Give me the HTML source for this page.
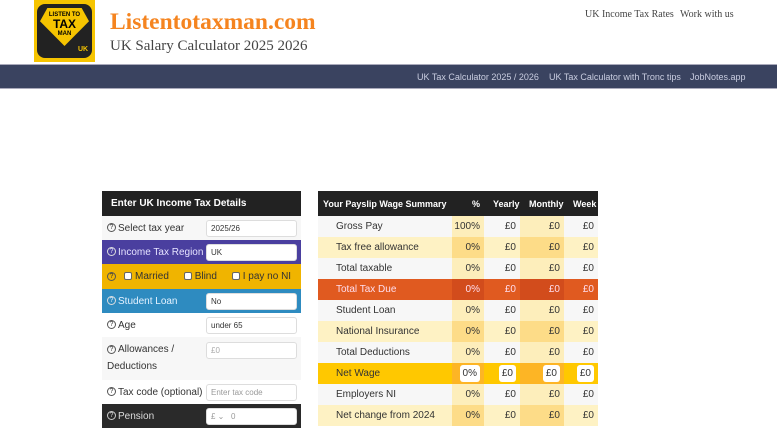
<!DOCTYPE html>
<html><head><style>
*{box-sizing:border-box;margin:0;padding:0}
body{width:777px;height:423px;overflow:hidden;background:#fff;font-family:"Liberation Sans",sans-serif;position:relative}
.abs{position:absolute}
.serif{font-family:"Liberation Serif",serif}
.nav{left:0;top:64px;width:777px;height:25px;background:#3a4360;border-top:1px solid #aab;border-bottom:1px solid #aab}
.nav span{position:absolute;top:7px;color:#c9cde0;font-size:9px;white-space:nowrap}
table{border-collapse:collapse;position:absolute;font-size:10px;color:#333;table-layout:fixed}
td,th{white-space:nowrap;overflow:hidden}
.lt{left:102px;top:191px;width:199px}
.lt td{height:24px;padding-left:5px;background:#f7f7f7;vertical-align:middle}
.lt td+td{padding-left:0}
.lt th,.rt th{background:#222;color:#fff;height:25px;text-align:left;padding-left:9px;font-size:10px}
.inp{display:block;background:#fff;border:1px solid #ddd;border-radius:3px;height:17px;width:91px;font-size:8px;padding:3px 4px;color:#333}
.q{display:inline-block;width:9px;height:9px;border:1px solid #555;border-radius:50%;font-size:7px;line-height:7px;text-align:center;vertical-align:middle;margin-right:2px}
.rt{left:318px;top:191px;width:280px}
.rt th{font-size:9px;overflow:visible;text-align:right;padding-right:3px}
.rt td{height:21px;text-align:right;padding-right:4px;background:#f7f7f7}
.rt td:first-child{text-align:left;padding-left:18px}
.rt tr.a td{background:#fef2c4}
.rt td.c{background:#fdeebb}
.rt tr.a td.c{background:#fddc88}
.rt tr.t td{background:#e05a20;color:#fde}
.rt tr.t td.c{background:#d24c1c}
.rt tr.n td{background:#ffc800}
.rt tr.n td.c{background:#fdb525}
.box{display:inline-block;background:#fff;border-radius:3px;padding:3px 3px}
.cb{display:inline-block;width:8px;height:8px;background:#fff;border:1px solid #666;border-radius:2px;vertical-align:middle;margin:0 3px 0 6px}
</style></head><body>
<div class="abs" style="left:34px;top:0;width:61px;height:62px;background:#f6c400">
 <div class="abs" style="left:3px;top:4px;width:55px;height:54px;background:#222;border-radius:8px"></div>
 <div class="abs" style="left:6px;top:8px;width:49px;height:38px;background:#f6c400;clip-path:polygon(15% 0,85% 0,100% 35%,50% 100%,0 35%);"></div>
 <div class="abs" style="left:6px;top:12px;width:49px;text-align:center;font-size:6px;font-weight:bold;line-height:7px">LISTEN TO<br><span style="font-size:12px;line-height:11px">TAX</span><br>MAN</div>
 <div class="abs" style="left:44px;top:46px;font-size:7px;font-weight:bold;color:#f6c400">UK</div>
</div>
<div class="abs serif" style="left:110px;top:9px;font-size:23.5px;color:#f5841f;font-weight:bold">Listentotaxman.com</div>
<div class="abs serif" style="left:110px;top:38px;font-size:15px;color:#444">UK Salary Calculator 2025 2026</div>
<div class="abs serif" style="left:585px;top:9px;font-size:10px;color:#444">UK Income Tax Rates</div>
<div class="abs serif" style="left:680px;top:9px;font-size:10px;color:#444">Work with us</div>
<div class="abs nav"><span style="left:417px">UK Tax Calculator 2025 / 2026</span><span style="left:549px">UK Tax Calculator with Tronc tips</span><span style="left:690px">JobNotes.app</span></div>

<table class="lt">
<colgroup><col style="width:104px"><col style="width:95px"></colgroup>
<tr><th colspan="2">Enter UK Income Tax Details</th></tr>
<tr><td><span class="q">?</span>Select tax year</td><td><span class="inp">2025/26</span></td></tr>
<tr><td style="background:#4a3f9f;color:#e6e3ff"><span class="q" style="border-color:#ddd">?</span>Income Tax Region</td><td style="background:#4a3f9f"><span class="inp">UK</span></td></tr>
<tr><td colspan="2" style="background:#f0b400;height:25px;padding-left:5px"><span class="q">?</span><span class="cb"></span>Married <span class="cb" style="margin-left:12px"></span>Blind <span class="cb" style="margin-left:12px"></span>I pay no NI</td></tr>
<tr><td style="background:#2e8bc0;color:#e4f2ff"><span class="q" style="border-color:#ddd">?</span>Student Loan</td><td style="background:#2e8bc0"><span class="inp">No</span></td></tr>
<tr><td style="background:#fff"><span class="q">?</span>Age</td><td style="background:#fff"><span class="inp">under 65</span></td></tr>
<tr><td style="height:43px;line-height:17px;vertical-align:top;padding-top:4px"><span class="q">?</span>Allowances /<br>Deductions</td><td style="vertical-align:top;padding-top:5px"><span class="inp" style="color:#aaa">£0</span></td></tr>
<tr><td style="background:#fff"><span class="q">?</span>Tax code (optional)</td><td style="background:#fff"><span class="inp" style="color:#999">Enter tax code</span></td></tr>
<tr><td style="background:#2a2a2a;color:#ddd"><span class="q" style="border-color:#ccc">?</span>Pension</td><td style="background:#2a2a2a"><span class="inp" style="color:#999">£ &#8964;&nbsp;&nbsp; 0</span></td></tr>
</table>

<table class="rt">
<colgroup><col style="width:134px"><col style="width:32px"><col style="width:36px"><col style="width:44px"><col style="width:34px"></colgroup>
<tr><th style="padding-left:5px;text-align:left">Your Payslip Wage Summary</th><th style="padding-right:4px">%</th><th>Yearly</th><th>Monthly</th><th style="padding-right:2px">Week</th></tr>
<tr><td>Gross Pay</td><td class="c">100%</td><td>£0</td><td class="c">£0</td><td>£0</td></tr>
<tr class="a"><td>Tax free allowance</td><td class="c">0%</td><td>£0</td><td class="c">£0</td><td>£0</td></tr>
<tr><td>Total taxable</td><td class="c">0%</td><td>£0</td><td class="c">£0</td><td>£0</td></tr>
<tr class="t"><td>Total Tax Due</td><td class="c">0%</td><td>£0</td><td class="c">£0</td><td>£0</td></tr>
<tr><td>Student Loan</td><td class="c">0%</td><td>£0</td><td class="c">£0</td><td>£0</td></tr>
<tr class="a"><td>National Insurance</td><td class="c">0%</td><td>£0</td><td class="c">£0</td><td>£0</td></tr>
<tr><td>Total Deductions</td><td class="c">0%</td><td>£0</td><td class="c">£0</td><td>£0</td></tr>
<tr class="n"><td>Net Wage</td><td class="c"><span class="box">0%</span></td><td><span class="box">£0</span></td><td class="c"><span class="box">£0</span></td><td><span class="box">£0</span></td></tr>
<tr><td>Employers NI</td><td class="c">0%</td><td>£0</td><td class="c">£0</td><td>£0</td></tr>
<tr class="a"><td>Net change from 2024</td><td class="c">0%</td><td>£0</td><td class="c">£0</td><td>£0</td></tr>
</table>
</body></html>
